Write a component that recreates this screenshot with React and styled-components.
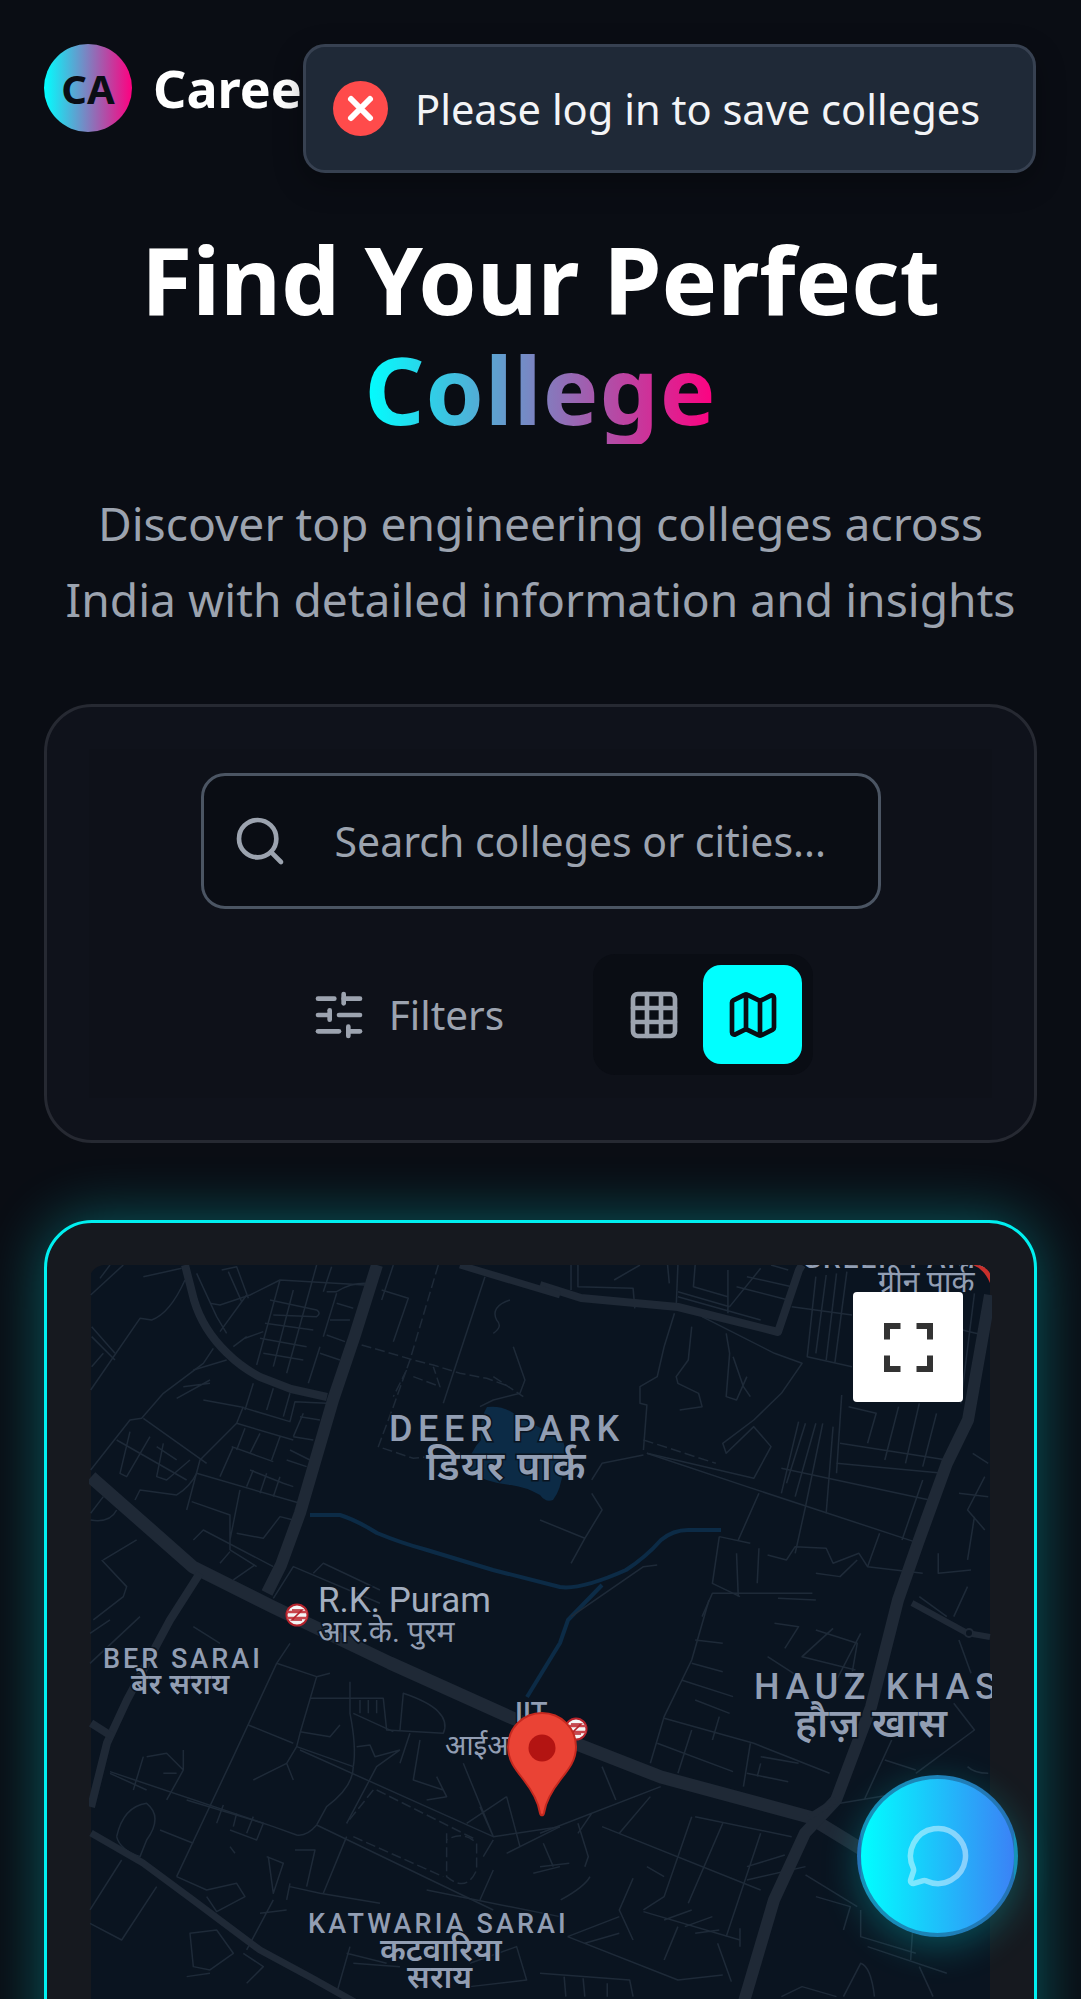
import styled, { createGlobalStyle } from 'styled-components';
import { Search, SlidersHorizontal, Grid3x3, Map as MapIcon, MessageCircle } from 'lucide-react';

const GlobalStyle = createGlobalStyle`
  html, body {
    margin: 0;
    padding: 0;
    background: #0a0d14;
  }
  * {
    box-sizing: border-box;
  }
`;

// each group is traced at the zoom scale of one map quarter
const STREETS_NW = [
  'M250 170L365 145', 'M92 225L190 135', 'M120 175L150 135', 'M92 510L240 295L275 300Q330 280 375 180',
  'M95 320L165 400M95 350L165 420M95 440L130 400', 'M410 160L470 290L500 340', 'M485 150L530 140L565 235M505 155L545 245',
  'M450 250L480 255L570 225L660 180L915 195', 'M800 215L830 215Q870 190 915 190', 'M660 180L590 435M700 210L640 440M770 135L680 460M815 140L790 215M830 220L790 350',
  'M630 240L770 270Q785 280 770 290L640 285M615 310L760 330M600 355L740 380M610 400L730 420', 'M780 380L745 490M780 400L840 420M800 345L855 365M810 300L870 300M830 250L880 265',
  'M480 335L560 225M555 355L610 335M520 380L560 350', 'M965 210L1045 235L1000 365M1000 135L965 240', 'M1275 170L1150 550',
  'M1350 240Q1290 260 1310 300Q1330 320 1300 340M1360 380L1395 480L1380 520L1300 540L1260 560',
  'M92 750L210 600L245 595L310 520L430 430L460 385M250 595L440 730M170 660L380 780', 'M210 635L180 760L200 770L270 650M290 680L350 720M310 670L290 770L320 780L390 720M350 535L450 480M370 500L450 490M400 450L500 420',
  'M430 540L540 560L690 605L705 545L800 550M580 490L555 570M640 505L620 570M690 520L670 590', 'M550 560L530 610L420 720L380 870M530 610L700 660M555 625L530 690M600 640L570 700M660 650L635 720',
  'M520 680L480 770M515 680L640 725M410 760L720 850M395 845L510 885L510 990M540 810L510 960M580 750L560 800M620 760L600 820M660 770L640 830M570 750L670 790L700 800',
  'M690 690L750 720M680 720L740 740M720 590L780 600M700 650L760 660M730 580L700 650', 'M225 840L240 810L350 825Q390 800 410 760', 'M92 880L130 830M92 900Q150 910 170 870',
  'M130 1020L230 960M125 1020L200 1100L190 1130L100 1200', 'M400 960L430 930L640 1040M510 990L590 1040M480 1030L510 995M520 1080L585 1035', 'M640 1135L700 1040L960 1150M760 1060L790 1030L960 1110M530 940L610 955L660 890L700 900',
];

const STREETS_NW_DASHED = [
  'M905 375L1010 405L1060 420L1120 435L1200 460L1280 475L1350 500', 'M1135 135L1050 420L1000 560L955 680L1060 715L1200 700',
  'M1040 450L1000 530M1060 470L1140 500L1120 440M1300 470L1390 530',
];

const STREETS_NE = [
  'M90 135L90 210M110 135L110 200L270 205L275 265M215 180L290 135M370 135L375 190M400 135L395 260M450 135L445 200L545 230',
  'M400 215L550 260M400 230L640 300M545 150L545 280M550 260L640 145M570 200L720 240M600 170L730 200M670 135L720 150',
  'M390 280L360 380L340 470L290 500L290 550L310 555L300 690', 'M440 320L430 420L395 470L400 490L460 520L470 560L405 570', 'M540 340L550 400L540 530L570 540L600 470',
  'M470 290L680 400L760 430L700 520L620 600L530 670L540 700L620 620L670 680L620 775L310 700', 'M560 410L590 500L610 530',
  'M730 260L905 285M800 170L775 410L905 440M830 165L800 400M860 160L830 420M890 155L855 430', 'M750 605L700 820M770 610L715 790M800 610L740 830M820 610L770 860M850 620L830 880M875 525L860 760',
  'M870 670L1180 720M860 730L1170 760M700 745L1130 840M895 560L975 580L950 670M1040 560L1000 720M1100 550L1060 730M1150 580L1110 740',
  'M1225 330L1285 345M1260 220L1220 550M1290 370L1240 520', 'M310 700L600 800L1085 965M635 820L575 960M770 860L740 1000M985 940L950 1040M1110 780L1050 960',
  'M520 950L610 970M520 950L500 1090L580 1130M570 1000L575 1130M635 985L630 1090', 'M660 1005L715 1020L740 980L830 985L850 1030L925 1000L950 1040L1110 1060M800 1060L870 1070L920 1020',
  'M470 1190L500 1120L790 1120M690 1135L800 1140M1100 1130L1180 1190M1240 1100L1200 1190', 'M1290 770L1240 870L1290 930M1215 820L1300 830M1255 700L1300 730M1155 1000L1155 1060L1250 1050M1240 1020L1260 890',
  'M150 780L180 730L300 705M150 820L180 870L130 955L0 900M130 955L90 1030M90 1190L300 1040L340 1035',
];

const STREETS_SW = [
  'M90 190L240 50M90 100L150 60M400 80L480 130', 'M690 130L650 190L520 470L350 830M650 190L770 230L720 400L710 440L880 500M770 230L810 220',
  'M720 395L810 410L840 375M565 375L700 430M710 440L680 490L700 540M680 490L580 540', 'M880 500Q890 440 870 340L870 245M880 340L1000 395',
  'M750 295L970 295L980 390L1150 400Q1180 330 1030 280L1020 390M900 300V340M925 300V340M950 300V340', 'M890 440L930 435L945 470L1020 450M1020 450L950 500L860 670M1050 400L1020 490M1080 420L1060 540L1150 570M1130 530L1160 590L1100 600',
  'M150 515L640 680L710 705Q740 710 770 675M720 450L1300 710L1500 680M770 675L1300 930', 'M770 675L800 620Q880 560 880 500M790 880L860 710',
  'M90 930L185 780M90 970L185 1020L290 860M260 470L320 460L370 510L320 600M250 470L220 570M370 450V510M310 520H350M150 520L260 570',
  'M380 600L610 670L590 720L510 690M470 670L490 615M520 680L530 640M560 700L580 650M510 740L525 760', 'M170 710Q190 620 260 610Q310 650 260 720L240 770Q180 750 170 710M300 690L400 730',
  'M350 830L440 870L530 850L555 890L470 935L440 890', 'M620 770L670 790L640 880L625 770M705 750H765L740 860M690 860L780 880L960 910M690 850L680 900M640 900L560 1050M600 940L680 930',
  'M390 1000L470 990L520 1060L450 1110L400 1100ZM550 1060L610 1100L560 1150M380 1130L450 1120', 'M860 1060L980 1090M870 1040L830 1180M880 1090L1020 1100M1230 1090L1370 1040L1400 1140L1230 1160',
  'M1210 490L1300 710M1220 670L1340 590M1260 620L1300 710M1340 590L1380 740M1380 740L1500 680M1340 760L1500 680M1450 730L1480 800M1420 820L1500 800M1300 810L1260 900M1300 720L1270 770',
  'M1100 870L1500 950',
];

const STREETS_SW_DASHED = [
  'M880 710L1150 830', 'M940 570L860 670M950 570L1250 720', 'M1160 700V830Q1220 880 1250 810V730Q1210 690 1160 720',
];

const STREETS_SE = [
  'M490 0L440 180L360 350L320 490M450 120L530 130M440 190L530 215M410 240L560 290M450 300L550 340', 'M360 355L620 430L840 520M440 390L400 520M520 350L500 420M340 430L560 515M610 430L590 560M600 520L720 545M640 490L630 530M640 470L750 490',
  'M660 170L750 230M850 85L760 170L915 210M800 90L920 130L900 250M930 100L860 240M680 70L750 80L710 145', 'M1020 420L940 600M1000 480L1090 510M1200 310L1260 390L1090 520M870 610L1100 570M1240 500Q1260 520 1300 520',
  'M180 500L220 600M0 700L350 560M110 700L150 640M230 700L320 590M180 680L640 870', 'M440 650L360 890L300 930M530 670L430 910M450 650L730 710M640 700L540 1010M600 800L710 765M600 840L770 800M310 800L360 830M270 835L230 930L270 1020',
  'M300 935L580 1020M230 950L80 1010M80 1010L400 1140L530 1125M400 980L360 1080M130 1030L230 1000M515 1030L555 1145M580 985V1040M360 960L440 930M420 980L500 950M450 1000L520 990',
  'M800 890L900 920L880 990M770 825L920 920', 'M930 930V1010L1090 1060M1080 1000L1075 1080M950 1040L1180 1120M1100 1100L1140 1190M880 1190L930 1090Q960 1100 970 1190M700 1190L760 1160L860 1190',
  'M0 1120L260 1140L270 1190M70 1130L75 1190M125 1135L130 1190M195 1150V1190', 'M0 800L85 790M60 900Q130 860 145 830M110 670L140 770L130 800', 'M1215 120L1250 220',
];

const ROADS = [
  { d: 'M286 0L264 70L242 135L209 248L190 300L176 328', w: 12 },
  { d: 'M94 0L103 35Q112 65 136 88Q150 102 169 112L200 124L236 132', w: 8 },
  { d: 'M0 212L102 302L182 342L299 398L419 452L483 478L570 512L718 552L780 590', w: 13 },
  { d: 'M899 30L877 155L856 198L828 275L807 335L780 442L745 535L714 568L683 635L652 740', w: 12 },
  { d: 'M449 20L490 33L587 42L687 67L708 5L711 0', w: 8 },
  { d: 'M369 0L469 30', w: 7 },
  { d: 'M0 568L52 598L102 635L169 685L219 712L269 740', w: 7 },
  { d: 'M109 308L79 355L36 435L16 478L0 542', w: 8 },
  { d: 'M0 458L22 472', w: 8 },
  { d: 'M718 552L745 535M821 338L876 368L899 372', w: 6 },
];

const LABELS = [
  { x: 298, y: 176, size: 36, gap: 5.6, text: 'DEER PARK' },
  { x: 335, y: 215, size: 40, bold: true, gap: 1.4, text: 'डियर पार्क' },
  { x: 227, y: 347, size: 35, light: true, text: 'R.K. Puram', bright: true },
  { x: 227, y: 377, size: 30, light: true, text: 'आर.के. पुरम' },
  { x: 12, y: 403, size: 27, gap: 3, text: 'BER SARAI' },
  { x: 40, y: 429, size: 29, bold: true, gap: 0.4, text: 'बेर सराय' },
  { x: 424, y: 457, size: 28, text: 'IIT' },
  { x: 354, y: 490, size: 28, light: true, text: 'आईआईटी' },
  { x: 663, y: 434, size: 36, gap: 5.6, text: 'HAUZ KHAS' },
  { x: 704, y: 472, size: 40, bold: true, gap: 1, text: 'हौज़ खास' },
  { x: 217, y: 668, size: 27, gap: 3.1, text: 'KATWARIA SARAI' },
  { x: 289, y: 696, size: 32, bold: true, text: 'कटवारिया' },
  { x: 316, y: 723, size: 32, bold: true, text: 'सराय' },
  { x: 711, y: 3, size: 28, gap: 2, text: 'GREEN PARK' },
  { x: 787, y: 27, size: 30, light: true, text: 'ग्रीन पार्क' },
];

const labelWeight = (label) => {
  if (label.bold) return 600;
  return label.light ? 400 : 500;
};

function MetroMark({ x, y }) {
  return (
    <g transform={`translate(${x} ${y})`}>
      <circle r="10.5" fill="#f4f4f4" stroke="#b6232c" strokeWidth="2" />
      <path d="M-10 -3H10M-10 3H10" stroke="#c9444b" strokeWidth="2.4" />
      <path d="M-5 -5H5L-5 5H5" stroke="#b6232c" strokeWidth="1.6" fill="none" />
    </g>
  );
}

function MapDrawing() {
  return (
    <MapSvg viewBox="0 0 899 800">
      <rect width="899" height="800" fill="#0a1420" />
      <Lake d="M396 142Q412 140 425 150Q450 165 470 170Q478 190 472 205Q470 225 462 235Q455 238 449 230Q435 222 420 220Q395 218 375 205Q380 185 390 175Q388 155 396 142Z" />
      <River d="M219 250L249 250Q265 255 286 268Q310 278 336 285L402 305L469 322Q490 325 535 305Q555 292 570 275Q582 265 597 265L630 265" />
      <River d="M511 320L477 355L469 378L436 432" />
      <g transform="translate(-31 -45) scale(0.3333)">
        {STREETS_NW.map((d) => <Street key={d} d={d} />)}
        {STREETS_NW_DASHED.map((d) => <DashedStreet key={d} d={d} />)}
      </g>
      <g transform="translate(449 -45) scale(0.3448 0.3333)">
        {STREETS_NE.map((d) => <Street key={d} d={d} />)}
        <DashedStreet d="M300 660L510 730" />
      </g>
      <g transform="translate(-31 335) scale(0.3333)">
        {STREETS_SW.map((d) => <Street key={d} d={d} />)}
        {STREETS_SW_DASHED.map((d) => <DashedStreet key={d} d={d} />)}
      </g>
      <g transform="translate(449 335) scale(0.3448 0.3333)">
        {STREETS_SE.map((d) => <Street key={d} d={d} />)}
      </g>
      {ROADS.map((road) => <Road key={road.d} d={road.d} strokeWidth={road.w} />)}
      <circle cx="878" cy="368" r="4" fill="#0a1420" stroke="#1f2936" strokeWidth="2" />
      {LABELS.map((label) => (
        <MapLabel
          key={label.text}
          x={label.x}
          y={label.y}
          fontSize={label.size}
          letterSpacing={label.gap || 0}
          fontWeight={labelWeight(label)}
          $bright={label.bright}
        >
          {label.text}
        </MapLabel>
      ))}
      <MetroMark x={206} y={350} />
      <MetroMark x={485} y={464} />
      <path d="M882 0Q893 4 899 18V0Z" fill="#c9302c" />
      <g transform="translate(416 448)">
        <path d="M35 0C16 0 1 15 1 34C1 47 8 56 16 66C23 75 31 86 33 100C33.500 103 36.500 103 37 100C39 86 47 75 54 66C62 56 69 47 69 34C69 15 54 0 35 0Z" fill="#ea4335" stroke="#c5291f" strokeWidth="2" />
        <circle cx="35" cy="35" r="13.500" fill="#b31412" />
      </g>
    </MapSvg>
  );
}

function App() {
  return (
    <Page>
      <GlobalStyle />
      <Nav>
        <LogoBadge>
          <LogoLetters>CA</LogoLetters>
        </LogoBadge>
        <Brand>CareerAlly</Brand>
      </Nav>

      <Toast>
        <ToastIcon viewBox="0 0 55 55">
          <circle cx="27.500" cy="27.500" r="27.500" fill="#ff4b4b" />
          <path d="M18 18L37 37M37 18L18 37" stroke="#fff" strokeWidth="6" strokeLinecap="round" />
        </ToastIcon>
        <ToastText>Please log in to save colleges</ToastText>
      </Toast>

      <Hero>
        <Title>
          Find Your Perfect
          <GradientWord>College</GradientWord>
        </Title>
        <Subtitle>Discover top engineering colleges across India with detailed information and insights</Subtitle>
      </Hero>

      <FilterPanel>
        <FilterInner>
          <SearchBox>
            <SearchIcon size={56} strokeWidth={2} />
            <SearchInput placeholder="Search colleges or cities..." readOnly />
          </SearchBox>
          <ControlRow>
            <FilterButton>
              <SlidersHorizontal size={56} strokeWidth={2} />
              Filters
            </FilterButton>
            <ViewToggle>
              <ToggleButton>
                <Grid3x3 size={56} strokeWidth={2} />
              </ToggleButton>
              <ToggleButton $active>
                <MapIcon size={56} strokeWidth={2} />
              </ToggleButton>
            </ViewToggle>
          </ControlRow>
        </FilterInner>
      </FilterPanel>

      <MapCard>
        <MapFrame>
          <MapDrawing />
          <FullscreenButton>
            <svg width="49" height="49" viewBox="0 0 49 49">
              <path d="M0 0H16.500V6H6V16.500H0ZM32.500 0H49V16.500H43V6H32.500ZM0 32.500H6V43H16.500V49H0ZM43 32.500H49V49H32.500V43H43Z" fill="#333" />
            </svg>
          </FullscreenButton>
        </MapFrame>
      </MapCard>

      <ChatButton>
        <MessageCircle size={66} strokeWidth={2} />
      </ChatButton>
    </Page>
  );
}

export default App;

const Page = styled.div`
  position: relative;
  width: 1081px;
  height: 1999px;
  padding: 44px;
  overflow: hidden;
  background: #0a0d14;
  font-family: 'Noto Sans', 'Open Sans', sans-serif;
`;

const Nav = styled.header`
  display: flex;
  align-items: center;
  gap: 21px;
  height: 88px;
`;

const LogoBadge = styled.div`
  display: flex;
  align-items: center;
  justify-content: center;
  width: 88px;
  height: 88px;
  border-radius: 50%;
  background: linear-gradient(90deg, #00ffff, #ff0080);
`;

const LogoLetters = styled.span`
  font-size: 40px;
  font-weight: 700;
  color: #0a0d14;
`;

const Brand = styled.span`
  margin-top: -2px;
  font-size: 52px;
  font-weight: 700;
  color: #ffffff;
  white-space: nowrap;
`;

const Toast = styled.div`
  position: absolute;
  top: 44px;
  left: 303px;
  display: flex;
  align-items: center;
  gap: 27px;
  width: 733px;
  height: 129px;
  padding: 0 27px;
  background: #1f2937;
  border: 3px solid #374151;
  border-radius: 22px;
  box-shadow: 0 10px 30px rgba(0, 0, 0, 0.3);
`;

const ToastIcon = styled.svg`
  flex: none;
  width: 55px;
  height: 55px;
`;

const ToastText = styled.span`
  font-size: 41.6px;
  color: #f3f4f6;
  white-space: nowrap;
`;

const Hero = styled.section`
  display: flex;
  flex-direction: column;
  align-items: center;
  padding-top: 92px;
  text-align: center;
`;

const Title = styled.h1`
  margin: 0;
  font-size: 93.5px;
  font-weight: 700;
  line-height: 110px;
  color: #ffffff;
`;

const GradientWord = styled.span`
  display: block;
  width: fit-content;
  margin: 0 auto;
  background: linear-gradient(90deg, #00ffff, #ff0080);
  -webkit-background-clip: text;
  background-clip: text;
  color: transparent;
  letter-spacing: 1px;
`;

const Subtitle = styled.p`
  width: 980px;
  margin: 42px 0 0;
  font-size: 46.2px;
  line-height: 76px;
  color: #9ca3af;
`;

const FilterPanel = styled.section`
  margin-top: 66px;
  padding: 42px;
  background: #0f121b;
  border: 3px solid #262932;
  border-radius: 48px;
`;

const FilterInner = styled.div`
  display: flex;
  flex-direction: column;
  align-items: center;
  gap: 45px;
  padding: 24px 0 23px;
  background: #0e1119;
`;

const SearchBox = styled.div`
  display: flex;
  align-items: center;
  gap: 47px;
  width: 680px;
  height: 136px;
  padding: 0 28px;
  background: #0a0d14;
  border: 3px solid #4b5563;
  border-radius: 24px;
`;

const SearchIcon = styled(Search)`
  flex: none;
  color: #9ca3af;
`;

const SearchInput = styled.input`
  flex: 1;
  min-width: 0;
  padding: 0;
  border: 0;
  outline: 0;
  background: transparent;
  font-family: inherit;
  font-size: 41px;
  color: #9ca3af;
  &::placeholder {
    color: #9ca3af;
    opacity: 1;
  }
`;

const ControlRow = styled.div`
  display: flex;
  align-items: center;
  gap: 89px;
  padding-left: 43px;
`;

const FilterButton = styled.div`
  display: flex;
  align-items: center;
  gap: 22px;
  font-size: 40.5px;
  color: #9ca3af;
`;

const ViewToggle = styled.div`
  display: flex;
  gap: 0;
  padding: 11px;
  background: #0a0d14;
  border-radius: 22px;
`;

const ToggleButton = styled.div`
  display: flex;
  align-items: center;
  justify-content: center;
  width: 99px;
  height: 99px;
  border-radius: 18px;
  background: ${({ $active }) => ($active ? '#00ffff' : 'transparent')};
  color: ${({ $active }) => ($active ? '#0a0d14' : '#9ca3af')};
`;

const MapCard = styled.section`
  margin-top: 77px;
  padding: 42px;
  background: #16191f;
  border: 3px solid #00f0f0;
  border-radius: 48px;
  box-shadow: 0 0 60px rgba(0, 255, 255, 0.32);
`;

const MapFrame = styled.div`
  position: relative;
  height: 800px;
  overflow: hidden;
  border-radius: 16px;
`;

const MapSvg = styled.svg`
  display: block;
  width: 100%;
  height: 100%;
`;

const Street = styled.path`
  fill: none;
  stroke: #1e2a38;
  stroke-width: 4.5;
  stroke-linejoin: round;
`;

const DashedStreet = styled(Street)`
  stroke-dasharray: 30 12;
`;

const Road = styled.path`
  fill: none;
  stroke: #1f2936;
  stroke-linejoin: round;
`;

const River = styled.path`
  fill: none;
  stroke: #0c2b46;
  stroke-width: 4;
  stroke-linejoin: round;
`;

const Lake = styled.path`
  fill: #0c2b46;
`;

const MapLabel = styled.text`
  font-family: Roboto, 'Noto Sans', sans-serif;
  fill: ${({ $bright }) => ($bright ? '#a3aebf' : '#929eb3')};
  stroke: #0a1420;
  stroke-width: 3px;
  paint-order: stroke;
`;

const FullscreenButton = styled.div`
  position: absolute;
  top: 27px;
  right: 29px;
  display: flex;
  align-items: center;
  justify-content: center;
  width: 110px;
  height: 110px;
  background: #ffffff;
  border-radius: 4px;
`;

const ChatButton = styled.div`
  position: absolute;
  top: 1775px;
  left: 857px;
  display: flex;
  align-items: center;
  justify-content: center;
  width: 161px;
  height: 162px;
  border-radius: 50%;
  background: linear-gradient(90deg, #00ffff, #3b82f6);
  border: 4px solid rgba(30, 110, 160, 0.75);
  box-shadow: 0 10px 36px rgba(0, 255, 255, 0.25);
  color: rgba(255, 255, 255, 0.45);
`;
